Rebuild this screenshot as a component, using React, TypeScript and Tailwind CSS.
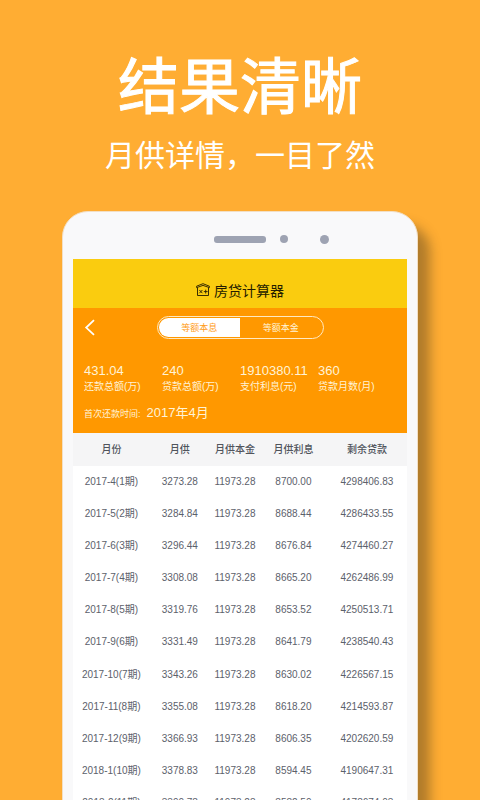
import { useState } from "react";

type Row = {
  month: string;
  payment: string;
  principal: string;
  interest: string;
  remaining: string;
};

const summary = [
  { value: "431.04", label: "还款总额(万)" },
  { value: "240", label: "贷款总额(万)" },
  { value: "1910380.11", label: "支付利息(元)" },
  { value: "360", label: "贷款月数(月)" },
];

const rows: Row[] = [
  { month: "2017-4(1期)", payment: "3273.28", principal: "11973.28", interest: "8700.00", remaining: "4298406.83" },
  { month: "2017-5(2期)", payment: "3284.84", principal: "11973.28", interest: "8688.44", remaining: "4286433.55" },
  { month: "2017-6(3期)", payment: "3296.44", principal: "11973.28", interest: "8676.84", remaining: "4274460.27" },
  { month: "2017-7(4期)", payment: "3308.08", principal: "11973.28", interest: "8665.20", remaining: "4262486.99" },
  { month: "2017-8(5期)", payment: "3319.76", principal: "11973.28", interest: "8653.52", remaining: "4250513.71" },
  { month: "2017-9(6期)", payment: "3331.49", principal: "11973.28", interest: "8641.79", remaining: "4238540.43" },
  { month: "2017-10(7期)", payment: "3343.26", principal: "11973.28", interest: "8630.02", remaining: "4226567.15" },
  { month: "2017-11(8期)", payment: "3355.08", principal: "11973.28", interest: "8618.20", remaining: "4214593.87" },
  { month: "2017-12(9期)", payment: "3366.93", principal: "11973.28", interest: "8606.35", remaining: "4202620.59" },
  { month: "2018-1(10期)", payment: "3378.83", principal: "11973.28", interest: "8594.45", remaining: "4190647.31" },
  { month: "2018-2(11期)", payment: "3390.78", principal: "11973.28", interest: "8582.50", remaining: "4178674.03" },
];

const methods = ["等额本息", "等额本金"];

export default function App() {
  return (
    <main className="flex h-screen flex-col overflow-hidden bg-[#ffad33] font-['Liberation_Sans','Noto_Sans_CJK_SC',sans-serif]">
      <header className="pt-14 text-center text-white">
        <h1 className="text-[61px] leading-[64px] [-webkit-text-stroke:1px_white]">结果清晰</h1>
        <p className="mt-4 text-[30px] leading-10">月供详情，一目了然</p>
      </header>
      <div className="mt-[35px] px-[62px]">
        <Phone>
          <TitleBar />
          <Summary />
          <Schedule />
        </Phone>
      </div>
    </main>
  );
}

function Phone({ children }: { children: React.ReactNode }) {
  return (
    <section className="rounded-t-[26px] border border-[#f3dfc4] bg-[#f9f9fa] px-[10px] shadow-[12px_14px_12px_rgba(60,50,30,0.4)]">
      <div className="grid h-[47px] grid-cols-[1fr_auto_1fr] items-center pt-[7px]" aria-hidden>
        <span />
        <span className="h-[7px] w-[52px] rounded-[3px] bg-[#9ea3b2]" />
        <span className="flex items-center gap-8 pl-[14px]">
          <span className="size-2 rounded-full bg-[#9ea3b2]" />
          <span className="size-[9px] rounded-full bg-[#9ea3b2]" />
        </span>
      </div>
      {children}
    </section>
  );
}

function TitleBar() {
  return (
    <div className="flex h-[49px] items-end justify-center gap-1 bg-[#facc0f] pb-[7px] text-[#241c00]">
      <HouseIcon />
      <h2 className="text-[14px] leading-5">房贷计算器</h2>
    </div>
  );
}

function HouseIcon() {
  return (
    <svg
      className="mb-1 size-[14px]"
      viewBox="0 0 14 14"
      fill="none"
      stroke="currentColor"
      strokeWidth="0.9"
      strokeLinejoin="round"
      aria-hidden
    >
      <path d="M0.6 4.6V3.2L7 0.7l6.4 2.5v1.4L7 2.4z" />
      <path d="M1.5 4.5v8h11v-8" />
      <path d="M3.4 7l3 3.2M6.4 7l-3 3.2M7.8 8.6h3.8M9.7 6.7v3.8" />
    </svg>
  );
}

function Summary() {
  const [method, setMethod] = useState(methods[0]);

  return (
    <div className="h-[125px] bg-[#ff9800] px-[11px] pt-2 text-[#fff3d6]">
      <div className="grid h-[23px] grid-cols-[1fr_auto_1fr] items-center">
        <button type="button" aria-label="返回" className="w-3">
          <svg className="h-[17px] w-3" viewBox="0 0 12 17" fill="none" stroke="#fff" strokeWidth="1.8">
            <path d="M10 1.2L2.2 8.6l7.8 7.2" />
          </svg>
        </button>
        <div className="flex h-[23px] w-[167px] overflow-hidden rounded-full border border-[#ffe9c2] p-px" role="group" aria-label="还款方式">
          {methods.map((m) => (
            <button
              key={m}
              type="button"
              aria-pressed={method === m}
              onClick={() => setMethod(m)}
              className={
                method === m
                  ? "flex-1 bg-white text-[9px] leading-3 text-[#ff9d1a] first:rounded-l-full last:rounded-r-full"
                  : "flex-1 text-[9px] leading-3 first:rounded-l-full last:rounded-r-full"
              }
            >
              {m}
            </button>
          ))}
        </div>
      </div>
      <dl className="mt-6 grid grid-cols-4">
        {summary.map((s) => (
          <div key={s.label} className="flex flex-col-reverse">
            <dt className="text-[10px] leading-4 whitespace-nowrap">{s.label}</dt>
            <dd className="text-[13px] leading-4">{s.value}</dd>
          </div>
        ))}
      </dl>
      <p className="mt-[10px] flex items-baseline gap-1.5 leading-4">
        <span className="text-[9px]">首次还款时间:</span>
        <span className="text-[13px]">2017年4月</span>
      </p>
    </div>
  );
}

function Schedule() {
  return (
    <table className="h-[386px] w-full table-fixed bg-white text-center text-[10px] leading-4 text-[#5c616b]">
      <thead className="bg-[#f5f5f6] text-[#50545c]">
        <tr className="h-[33px]">
          <th className="w-[23%] font-medium">月份</th>
          <th className="w-[18%] font-medium">月供</th>
          <th className="w-[15%] font-medium whitespace-nowrap">月供本金</th>
          <th className="w-[20%] font-medium">月供利息</th>
          <th className="w-[24%] font-medium">剩余贷款</th>
        </tr>
      </thead>
      <tbody>
        {rows.map((r) => (
          <tr key={r.month}>
            <td>{r.month}</td>
            <td>{r.payment}</td>
            <td>{r.principal}</td>
            <td>{r.interest}</td>
            <td>{r.remaining}</td>
          </tr>
        ))}
      </tbody>
    </table>
  );
}
